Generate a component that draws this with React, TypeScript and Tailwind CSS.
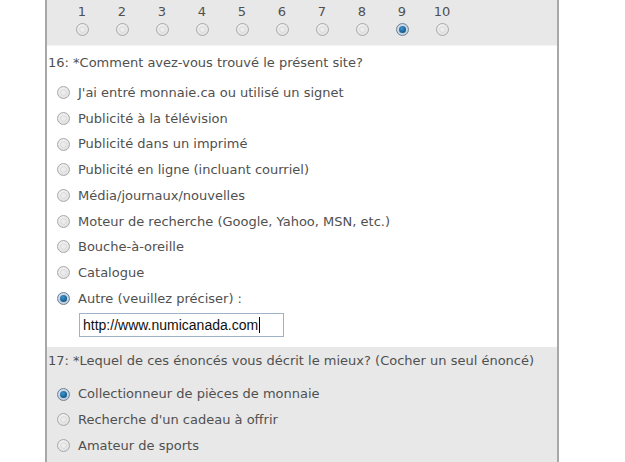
import React from "react";

function Radio({ checked = false }: { checked?: boolean }) {
  if (checked) {
    return (
      <span className="flex h-[13px] w-[13px] items-center justify-center rounded-full border border-[#6f8396] bg-[radial-gradient(circle_at_45%_40%,#dfe9f2,#b3c3d2)]">
        <span className="h-[7px] w-[7px] rounded-full bg-[radial-gradient(circle_at_40%_35%,#3d95d2,#063f6e)]" />
      </span>
    );
  }
  return (
    <span className="flex h-[13px] w-[13px] items-center justify-center rounded-full border border-[#a9a9a9] bg-[radial-gradient(circle_at_45%_40%,#ffffff,#d4d4d4)]">
      <span className="h-[7px] w-[7px] rounded-full border border-[#d8d8d8] bg-[#ececec]" />
    </span>
  );
}

function Option({ label, checked }: { label: string; checked?: boolean }) {
  return (
    <div className="flex h-[25.7px] items-center">
      <div className="flex w-[31px] justify-center pl-[1px]">
        <Radio checked={checked} />
      </div>
      <span>{label}</span>
    </div>
  );
}

const q16 = [
  "J'ai entré monnaie.ca ou utilisé un signet",
  "Publicité à la télévision",
  "Publicité dans un imprimé",
  "Publicité en ligne (incluant courriel)",
  "Média/journaux/nouvelles",
  "Moteur de recherche (Google, Yahoo, MSN, etc.)",
  "Bouche-à-oreille",
  "Catalogue",
];

const q17 = ["Collectionneur de pièces de monnaie", "Recherche d'un cadeau à offrir", "Amateur de sports"];

export default function App() {
  return (
    <div className="h-[462px] w-[625px] overflow-hidden bg-white font-['DejaVu_Sans',Verdana,sans-serif] text-[13px] text-[#505050]">
      <div className="ml-[45px] w-[514px] border-x-2 border-[#a8a8a8]">
        <div className="flex h-[45px] bg-[#e8e8e8] pl-[15px] pt-[4px]">
          {[1, 2, 3, 4, 5, 6, 7, 8, 9, 10].map((n) => (
            <div key={n} className="flex w-[40px] flex-col items-center gap-[3px]">
              <span className="leading-[16px]">{n}</span>
              <Radio checked={n === 9} />
            </div>
          ))}
        </div>
        <div className="border-t border-[#f4f4f4] bg-white pb-[10px]">
          <div className="px-[1px] pt-[9px] leading-[16px]">16: *Comment avez-vous trouvé le présent site?</div>
          <div className="pt-[9px]">
            {q16.map((l) => (
              <Option key={l} label={l} />
            ))}
            <Option label="Autre (veuillez préciser) :" checked />
          </div>
          <div className="pl-[32px] pt-[2px]">
            <div className="flex h-[24px] w-[205px] items-center border border-[#9fb3c8] px-[3px] font-['Liberation_Sans',Arial,sans-serif] text-[14px] text-[#111]">
              http://www.numicanada.com
              <span className="ml-[1px] h-[16px] w-[1px] bg-black" />
            </div>
          </div>
        </div>
        <div className="h-[120px] bg-[#e8e8e8]">
          <div className="px-[1px] pt-[6px] leading-[16px]">17: *Lequel de ces énoncés vous décrit le mieux? (Cocher un seul énoncé)</div>
          <div className="pt-[12px]">
            {q17.map((l, i) => (
              <Option key={l} label={l} checked={i === 0} />
            ))}
          </div>
        </div>
      </div>
    </div>
  );
}
